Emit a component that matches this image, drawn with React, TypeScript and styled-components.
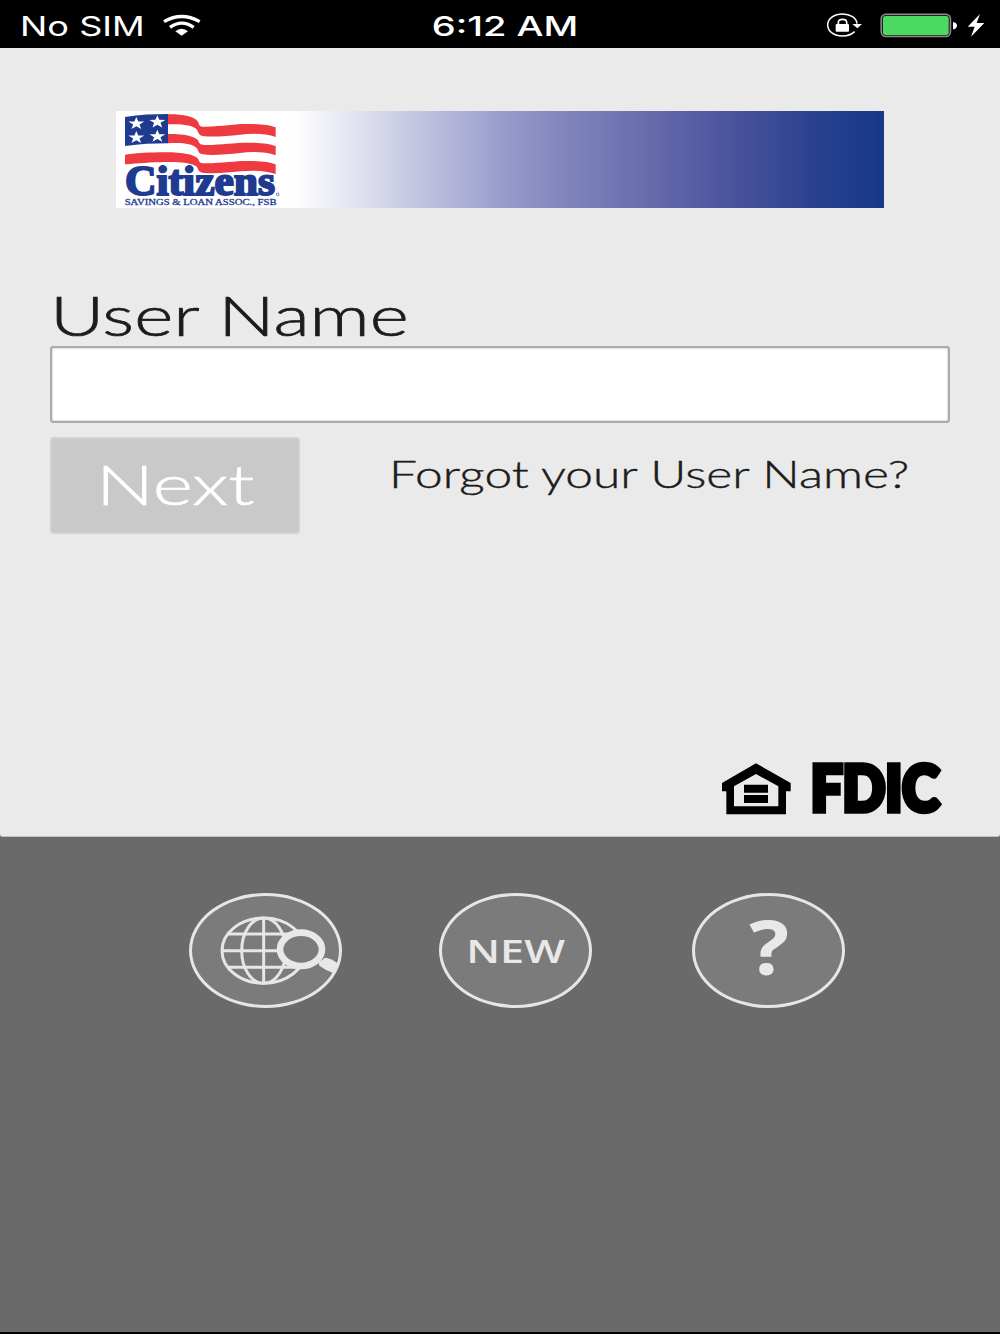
import React from 'react';
import styled, { createGlobalStyle } from 'styled-components';

const GlobalStyle = createGlobalStyle`
  * {
    box-sizing: border-box;
  }

  body {
    margin: 0;
    background-color: #000000;
  }
`;

const Screen = styled.div`
  display: flex;
  flex-direction: column;
  width: 1000px;
  height: 1334px;
  padding-bottom: 2px;
  overflow: hidden;
  background-color: #000000;
`;

/* Text drawn wider than the font's own letters */
const Wide = styled.span<{ $scale: number; $origin?: string }>`
  display: inline-block;
  white-space: nowrap;
  transform: scaleX(${({ $scale }) => $scale});
  transform-origin: ${({ $origin }) => $origin || 'left'} center;
`;

const StatusBar = styled.header`
  display: grid;
  grid-template-columns: 1fr auto 1fr;
  align-items: center;
  flex: none;
  height: 48px;
  padding: 3px 15px 0 20px;
  color: #ffffff;
  font-family: Inter, 'Liberation Sans', sans-serif;
  font-size: 27px;
  line-height: 45px;
`;

const Carrier = styled.div`
  display: flex;
  align-items: center;

  .name {
    width: 143px;
    padding-top: 1px;
  }
`;

const Clock = styled.div`
  display: flex;
  justify-content: center;
  width: 160px;
  padding: 1px 0 0 6px;
  font-weight: 550;
`;

const StatusIcons = styled.div`
  display: flex;
  align-items: center;
  justify-content: flex-end;

  svg {
    flex: none;
  }

  .battery {
    margin: 0 9px 0 18px;
  }
`;

const Main = styled.div`
  display: flex;
  flex-direction: column;
  flex: 1;
  background-color: #6a6a6a;
`;

const LoginPanel = styled.main`
  display: flex;
  flex-direction: column;
  flex: none;
  height: 789px;
  padding: 63px 50px 0;
  border-bottom: 1px solid #c4c4c4;
  border-radius: 0 0 3px 3px;
  background-color: #eaeaea;
  color: #1c1c1c;
  font-family: Lato, 'Open Sans', sans-serif;
  font-weight: 300;
`;

const Banner = styled.div`
  align-self: center;
  flex: none;
  width: 768px;
  height: 97px;
  background: linear-gradient(
    90deg,
    #ffffff 0,
    #ffffff 176px,
    #e6e7f3 230px,
    #c6c8e2 295px,
    #9a9dcb 385px,
    #8487be 440px,
    #696ead 525px,
    #4c559d 610px,
    #2b4190 695px,
    #163888 768px
  );

  svg {
    display: block;
  }
`;

const Form = styled.form`
  display: flex;
  flex-direction: column;
  margin-top: 77px;
`;

const Label = styled.label`
  height: 61px;
  font-size: 56px;
  line-height: 59px;
  -webkit-text-stroke: 0.7px #1c1c1c;
`;

const Input = styled.input`
  width: 900px;
  height: 77px;
  padding: 0 16px;
  border: 2px solid #acacac;
  border-radius: 3px;
  outline: none;
  background-color: #ffffff;
  box-shadow: inset 0 0 2px #9a9a9a;
  font: inherit;
  font-size: 48px;
`;

const Actions = styled.div`
  display: flex;
  align-items: flex-start;
  margin-top: 14px;
`;

const NextButton = styled.button`
  display: flex;
  align-items: center;
  width: 250px;
  height: 97px;
  padding: 0 0 4px 44px;
  border: 2px solid #d1d1d1;
  border-radius: 4px;
  background-color: #c9c9c9;
  color: #ffffff;
  font: inherit;
  font-size: 56px;
  -webkit-text-stroke: 0.6px #ffffff;
`;

const ForgotLink = styled.a`
  margin-left: 89px;
  padding-top: 13px;
  color: inherit;
  font-size: 38px;
  line-height: 46px;
  text-decoration: none;
  -webkit-text-stroke: 0.4px #1c1c1c;
`;

const Badges = styled.div`
  display: flex;
  justify-content: flex-end;
  gap: 20px;
  margin: auto 9px 21px 0;

  svg {
    display: block;
  }
`;

const Shortcuts = styled.nav`
  display: flex;
  gap: 97px;
  padding: 56px 0 0 189px;
`;

const RoundButton = styled.button<{ $size: number; $lift?: number }>`
  display: flex;
  align-items: center;
  justify-content: center;
  width: 153px;
  height: 115px;
  padding: 0 0 ${({ $lift }) => $lift || 0}px;
  border: 3px solid #e6e6e6;
  border-radius: 50%;
  background-color: #7b7b7b;
  color: #e8e8e8;
  font-family: 'Open Sans', sans-serif;
  font-size: ${({ $size }) => $size}px;
  font-weight: 650;
  line-height: 1;

  &:last-child {
    margin-left: 3px;
    padding-left: 2px;
    font-weight: 700;
  }
`;

const WifiIcon = () => (
  <svg width="40" height="24" viewBox="0 0 120 72">
    <g fill="none" stroke="#fff" strokeWidth="10">
      <path d="M3 23 Q56 -8 110 23" />
      <path d="M21 40 Q56 15 92 40" />
    </g>
    <path d="M37 52 Q56 36 75 52 L56 65 Z" fill="#fff" />
  </svg>
);

const LockIcon = () => (
  <svg width="36" height="26" viewBox="78 38 108 78">
    <path d="M164 94 C154 103 142 107 128 107 C102 107 83 93 83 74 C83 55 102 41 128 41 C151 41 169 53 171 70" fill="none" stroke="#fff" strokeWidth="4.5" />
    <path d="M157 71 H186 L172 84 Z" fill="#fff" />
    <path d="M115 74 V66 C115 54 140 54 140 66 V74" fill="none" stroke="#fff" strokeWidth="5" />
    <rect x="107" y="71" width="40" height="23" rx="3" fill="#fff" />
  </svg>
);

const BatteryIcon = () => (
  <svg className="battery" width="78" height="26" viewBox="240 38 234 78">
    <rect x="243.500" y="41.500" width="208" height="67" rx="14" fill="#222" stroke="#8b8b8b" strokeWidth="4.500" />
    <rect x="249" y="47" width="197" height="57" rx="8" fill="#4cd964" />
    <path d="M459 65 C475 67 475 85 459 87 Z" fill="#fff" />
  </svg>
);

const BoltIcon = () => (
  <svg width="18" height="26" viewBox="501 38 54 78">
    <path d="M540 41 L503 79 H524 L513 109 L553 68 H530 Z" fill="#fff" />
  </svg>
);

const starPoints = (cx: number, cy: number) =>
  Array.from({ length: 10 }, (_, i) => {
    const radius = i % 2 === 0 ? 1 : 0.4;
    const angle = (Math.PI / 5) * i - Math.PI / 2;
    return `${(cx + Math.cos(angle) * radius * 25).toFixed(1)},${(cy + Math.sin(angle) * radius * 20).toFixed(1)}`;
  }).join(' ');

const stars = [[109, 71], [172, 66], [109, 113], [172, 109]];

const CitizensLogo = () => (
  <svg width="180" height="97" viewBox="48 33 540 291">
    <g fill="#ee3a40">
      <path d="M202 43 C245 42 282 49 294 65 C299 74 294 81 318 80 C370 79 400 72 445 72 C485 72 508 76 527 82 V111 C500 101 460 99 420 104 C380 108 340 112 308 108 C293 105 296 95 290 88 C276 74 243 71 202 73 Z" />
      <path d="M202 102 C245 101 282 107 294 121 C299 130 298 136 318 135 C370 134 400 128 445 128 C485 128 508 132 527 138 V166 C500 156 460 154 420 159 C380 163 340 167 308 163 C293 160 296 150 290 144 C276 130 243 127 202 130 Z" />
      <path d="M75 164 C115 159 150 157 195 157 C250 157 284 164 294 176 C299 185 298 191 318 190 C370 189 400 183 445 183 C485 183 508 187 527 193 V222 C500 212 460 210 420 214 C380 218 340 222 308 218 C293 215 296 206 290 200 C276 188 235 185 195 186 C150 187 115 190 75 193 Z" />
    </g>
    <path d="M75 51 C120 44 160 42 204 42 V130 C160 130 120 132 75 138 Z" fill="#1f3b8f" />
    {stars.map(([x, y]) => (
      <polygon key={`${x}-${y}`} points={starPoints(x, y)} fill="#fff" />
    ))}
    <g fill="#1f3b8f" stroke="#1f3b8f" fontFamily="'Liberation Serif', serif">
      <text x="75" y="284" fontSize="125" fontWeight="700" strokeWidth="6" textLength="450" lengthAdjust="spacingAndGlyphs">Citizens</text>
      <text x="74" y="314" fontSize="25" strokeWidth="0.9" textLength="456" lengthAdjust="spacingAndGlyphs">SAVINGS &amp; LOAN ASSOC., FSB</text>
      <circle cx="533" cy="283" r="4" fill="none" strokeWidth="2" />
    </g>
  </svg>
);

const HousingIcon = () => (
  <svg width="69" height="52" viewBox="66 68 207 156">
    <path fillRule="evenodd" d="M168 69 L272 128 V153 H258 V222 H79 V153 H66 V128 Z M168 101 L102 138 V198 H235 V138 Z" />
    <path d="M132 133 H204 V157 H132 Z M132 164 H204 V188 H132 Z" />
  </svg>
);

const FdicLogo = () => (
  <svg width="130" height="52" viewBox="333 68 390 156" overflow="visible">
    <text
      x="332"
      y="213"
      fontFamily="Lato, sans-serif"
      fontWeight="900"
      fontSize="186"
      stroke="#000"
      strokeWidth="17"
      textLength="386"
      lengthAdjust="spacingAndGlyphs"
    >
      FDIC
    </text>
  </svg>
);

const GlobeSearchIcon = () => (
  <svg width="147" height="109" viewBox="67 49 441 327">
    <g fill="none" stroke="#e6e6e6" strokeWidth="9">
      <ellipse cx="282" cy="213" rx="125" ry="98" />
      <ellipse cx="282" cy="213" rx="66" ry="98" />
      <path d="M282 115 V311 M157 213 H407 M176 163 H388 M176 263 H388" />
    </g>
    <ellipse cx="394" cy="209" rx="63" ry="50" fill="#7b7b7b" stroke="#e8e8e8" strokeWidth="20" />
    <path d="M446 250 L466 234 Q482 235 504 251 Q500 268 490 280 Q466 271 450 259 Z" fill="#e8e8e8" />
  </svg>
);

const App: React.FC = () => {
  return (
    <>
      <GlobalStyle />
      <Screen>
        <StatusBar>
          <Carrier>
            <div className="name">
              <Wide $scale={1.34}>No SIM</Wide>
            </div>
            <WifiIcon />
          </Carrier>
          <Clock>
            <Wide $scale={1.41} $origin="center">6:12 AM</Wide>
          </Clock>
          <StatusIcons>
            <LockIcon />
            <BatteryIcon />
            <BoltIcon />
          </StatusIcons>
        </StatusBar>
        <Main>
          <LoginPanel>
            <Banner>
              <CitizensLogo />
            </Banner>
            <Form onSubmit={(e) => e.preventDefault()}>
              <Label htmlFor="username">
                <Wide $scale={1.335}>User Name</Wide>
              </Label>
              <Input id="username" type="text" />
              <Actions>
                <NextButton type="submit">
                  <Wide $scale={1.37}>Next</Wide>
                </NextButton>
                <ForgotLink href="#">
                  <Wide $scale={1.308}>Forgot your User Name?</Wide>
                </ForgotLink>
              </Actions>
            </Form>
            <Badges>
              <HousingIcon />
              <FdicLogo />
            </Badges>
          </LoginPanel>
          <Shortcuts>
            <RoundButton $size={32}>
              <GlobeSearchIcon />
            </RoundButton>
            <RoundButton $size={32}>
              <Wide $scale={1.35} $origin="center">NEW</Wide>
            </RoundButton>
            <RoundButton $size={76} $lift={10}>
              <Wide $scale={1.1} $origin="center">?</Wide>
            </RoundButton>
          </Shortcuts>
        </Main>
      </Screen>
    </>
  );
};

export default App;
